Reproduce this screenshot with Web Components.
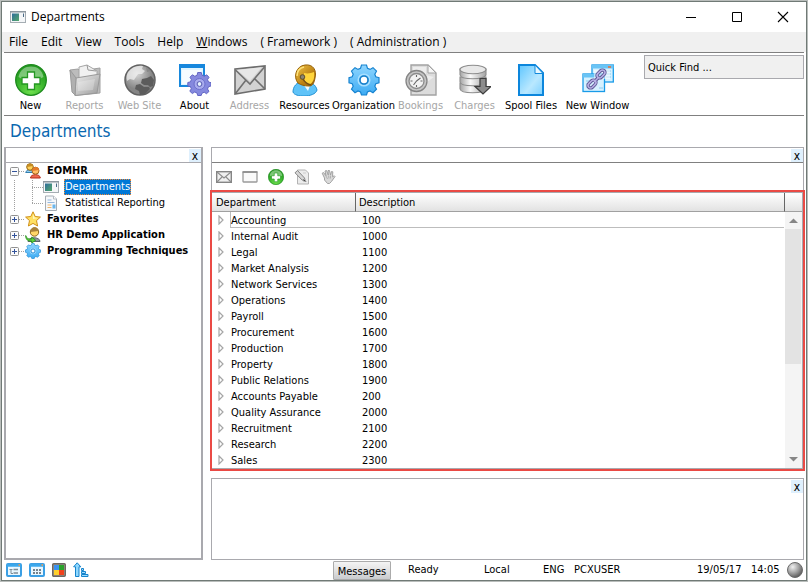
<!DOCTYPE html>
<html lang="en">
<head>
<meta charset="utf-8">
<title>Departments</title>
<style>
  html, body { margin: 0; height: 100%; }
  body {
    --ui: "DejaVu Sans Condensed", "DejaVu Sans", Tahoma, sans-serif;
    --menu: "Open Sans", "Noto Sans", sans-serif;
    --line: #a9a9ae;
    font: 11px/16px var(--ui);
    color: #000;
    background: #fff;
  }
</style>
</head>
<body>
<app-window></app-window>

<script>
const ICONS = {
  app: [16, 12, `<rect x=".5" y=".5" width="15" height="11" fill="#f4f6f8" stroke="#a5adb3"/><path d="M0 0h16v1.500H0z" fill="#8d979f"/><defs><linearGradient id="g" x2="1" y2="1"><stop stop-color="#2f6d9c"/><stop offset="1" stop-color="#55a86a"/></linearGradient></defs><rect x="2" y="2.500" width="7" height="7.500" fill="url(#g)"/><rect x="13" y="2.500" width="1" height="3.500" fill="#4a6a86"/>`],
  plus: [32, 32, `<defs><radialGradient id="g" cx=".5" cy=".85" r=".9"><stop offset="0" stop-color="#6fe04e"/><stop offset=".55" stop-color="#35b02a"/><stop offset="1" stop-color="#1d8f1c"/></radialGradient></defs><circle cx="16" cy="16" r="15.300" fill="url(#g)" stroke="#1c8a1c" stroke-width="1.300"/><path d="M3.500 13C5 5.500 10 2.500 16 2.500S27 5.500 28.500 13c-7 4-18 5-25 0z" fill="#fff" opacity=".38"/><path d="M12.500 8h7v5.500H25v6.500h-5.500v5.500h-7V20H7v-6.500h5.500z" fill="#fff" stroke="#249722" stroke-width="1.300"/>`],
  reports: [32, 32, `<defs><linearGradient id="g" x2="1" y2="1"><stop stop-color="#eee"/><stop offset="1" stop-color="#9a9a9a"/></linearGradient></defs><path d="M1 6l8-1 2 2 20-3v25l-25 2.500z" fill="#bcbcbc" stroke="#a0a0a0"/><path d="M10 3l8-2 5 3 5 3v16l-18 2z" fill="#f1f1f1" stroke="#a5a5a5"/><path d="M18 1l1 5 8 1" fill="none" stroke="#999"/><path d="M7 14l24-4-3 19-22 2.500z" fill="url(#g)" stroke="#999"/><path d="M1 6l6 8-1 17-3-3z" fill="#b0b0b0" stroke="#9a9a9a"/><path d="M9 18l17-3-2 11-15 1z" fill="#fff" opacity=".25"/>`],
  globe: [32, 32, `<defs><radialGradient id="g" cx=".4" cy=".3"><stop stop-color="#d5d5d5"/><stop offset="1" stop-color="#858585"/></radialGradient></defs><circle cx="16" cy="16" r="15" fill="url(#g)" stroke="#616161" stroke-width="1.500"/><path d="M4 8c4-5 10-7 15-6l-1 3 3 2-3 3-4 0-2 3-2 3-4-1-3 2c-1-4 0-7 1-9z" fill="#f3f3f3" opacity=".7"/><path d="M18 15l5-1 4-2 3 4-1 6-3 1-2-2-4 0-3-2zM12 21l4-1 4 3 5 0 1 2-5 5-5 1-1-4-4-2z" fill="#5c5c5c"/><path d="M22 3l5 4 -4 1z" fill="#888"/>`],
  about: [32, 32, `<rect x="1" y="2" width="24" height="20" fill="#dff4ff" stroke="#1888dc" stroke-width="2"/><rect x="0" y="0" width="26" height="4" fill="#1687dd"/><path d="M3 6h20l-12 14H3z" fill="#fff" opacity=".7"/><defs><path id="t" d="M-1.800-11h3.600l.7 2.700 2.400 1L7.200-8.700 9.500-6.200 8-3.800l1 2.300 2.600.7v3.200L9 3.200 8 5.500l1.500 2.400L7 10.200 4.700 8.700 2.400 9.800 1.700 12h-3.500l-.7-2.500-2.300-1L-7.200 10l-2.500-2.300L-8.200 5.300-9 3.200l-2.700-.7V-1l2.600-.6 1-2.300-1.400-2.400 2.400-2.400 2.400 1.500 2.300-1z"/></defs><g transform="translate(20.500 19.500)"><use href="#t" fill="#8589de" stroke="#6265c4"/></g><circle cx="20.500" cy="20" r="5.500" fill="#a9acee" stroke="#6c70cc"/><circle cx="20.500" cy="20" r="2.400" fill="#e6f3fd" stroke="#5256ae"/>`],
  address: [32, 32, `<path d="M1 5l30-3v23L1 30z" fill="#d2d2d2" stroke="#6d6d6d" stroke-width="1.600"/><path d="M1.500 29.500L12 16M31 25L20 14M1.500 6L16 20 30.500 3" fill="none" stroke="#707070" stroke-width="1.600"/><path d="M3 6l25-3-12 14z" fill="#efefef" opacity=".7"/>`],
  person: [32, 32, `<defs><linearGradient id="g" x2="1" y2="1"><stop stop-color="#f1c548"/><stop offset=".6" stop-color="#bd8214"/><stop offset="1" stop-color="#8d5d0b"/></linearGradient></defs><path d="M4 28c0-5 3-10 11-11 7 0 12 4 13 9-1 4-7 6-13 6-5 0-10-1-11-4z" fill="#5fc3f8" stroke="#2391d3"/><path d="M14 20l8-1-3 8z" fill="#f4fbff"/><path d="M9 19C4 13 7 2 16 1c8-1 12 5 10 13-1 6-3 8-6 8-5 0-8-1-11-3z" fill="url(#g)" stroke="#966006"/><path d="M15 9c4 1 7 0 10-1 1 6-1 11-4 12-4 0-7-4-6-11z" fill="#ffd53c"/><path d="M8 12c0-5 3-8 7-9" fill="none" stroke="#ffe27a" stroke-width="1.500"/><circle cx="13.500" cy="13" r="2.300" fill="#8a8474" stroke="#5f4f2c"/><path d="M14 15c2 4 4 5 8 6" fill="none" stroke="#725019" stroke-width="1.500"/>`],
  gear: [32, 32, `<defs><linearGradient id="g" x2="0" y2="1"><stop stop-color="#8fd6ff"/><stop offset="1" stop-color="#3dabf3"/></linearGradient></defs><path d="M13.500 1h5l1 3.400 2.500 1 3-1.700 3.500 3.500-1.700 3 1 2.600 3.200.9v5l-3.200 1-1 2.500 1.700 3-3.500 3.500-3-1.700-2.600 1-.9 3h-5l-1-3-2.500-1-3 1.700-3.500-3.500 1.700-3-1-2.500-3.200-1v-5l3.200-1 1-2.500-1.700-3L7 3.700l3 1.700 2.500-1z" fill="url(#g)" stroke="#1683d0" stroke-width="1.200"/><circle cx="16" cy="16" r="5.800" fill="none" stroke="#a9e0ff" stroke-width="1.500"/><circle cx="16" cy="16" r="4" fill="#fff" stroke="#167fca" stroke-width="1.600"/>`],
  bookings: [32, 32, `<path d="M6 1h17l8 8v22H6z" fill="#dcdcdc" stroke="#a2a2a2" stroke-width="1.400"/><path d="M23 1v8h8z" fill="#f6f6f6" stroke="#a2a2a2"/><path d="M8 3h13v8l8 2-21 15z" fill="#f3f3f3" opacity=".7"/><circle cx="11.500" cy="17" r="10.500" fill="#c6c6c6" stroke="#858585" stroke-width="1.300"/><circle cx="11.500" cy="17" r="7.500" fill="#f2f2f2" stroke="#8c8c8c" stroke-width="1.300"/><path d="M11.500 17l4-3M11.500 17l-3 4M11.500 11v2M11.500 21v2M5.500 17h2M15.500 17h2" stroke="#666" stroke-width="1.100"/>`],
  charges: [32, 32, `<defs><linearGradient id="g"><stop stop-color="#a4a4a4"/><stop offset=".4" stop-color="#fafafa"/><stop offset="1" stop-color="#a4a4a4"/></linearGradient></defs><g fill="url(#g)" stroke="#8c8c8c" stroke-width="1.100"><path d="M1 19v6c1 5 24 5 26 0v-6z"/><path d="M1 13v5c1 5 24 5 26 0v-5z"/><path d="M1 5v6c1 5 24 5 26 0V5z"/><ellipse cx="14" cy="5.500" rx="13" ry="4.300" fill="#e8e8e8"/></g><path d="M21 14.500h6v8h5L24 30l-8-7.500h5z" fill="#8c8c8c" stroke="#3d3d3d" stroke-width="1.200"/>`],
  file: [26, 32, `<defs><linearGradient id="g" x2="1" y2="1"><stop stop-color="#5fc6ff"/><stop offset=".6" stop-color="#b9e8ff"/><stop offset="1" stop-color="#7dd0ff"/></linearGradient></defs><path d="M1 1h16l8 8v22H1z" fill="url(#g)" stroke="#0c86dc" stroke-width="2"/><path d="M17 1v8.500h8z" fill="#e8f8ff" stroke="#1189dc"/>`],
  newwin: [32, 32, `<g fill="#d6f1ff" stroke="#199be8" stroke-width="1.300"><rect x="10" y="1" width="21.300" height="17"/><rect x="1" y="10" width="21.500" height="17.500"/></g><path d="M10 1h21.500v3.500H10zM1 10h21.500v3.500H1z" fill="#69c4f5"/><path d="M24 7h5M24 10h5M24 13h5M4 17h4M4 20h3M4 23h3M17 24h4" stroke="#8ccbee"/><path d="M12 6h16v9H12z" fill="#fff" opacity=".5"/><path d="M26 3h3" stroke="#f36e32" stroke-width="1.500"/><g fill="none" stroke="#5e5796" stroke-width="3.400"><rect x="-4.500" y="-2.500" width="9" height="5" rx="2.500" transform="translate(19 10) rotate(-45)"/><rect x="-4.500" y="-2.500" width="9" height="5" rx="2.500" transform="translate(10 20) rotate(-45)"/><path d="M12 18l5-5"/></g><g fill="none" stroke="#b8b1e4" stroke-width="1.500"><rect x="-4.500" y="-2.500" width="9" height="5" rx="2.500" transform="translate(19 10) rotate(-45)"/><rect x="-4.500" y="-2.500" width="9" height="5" rx="2.500" transform="translate(10 20) rotate(-45)"/><path d="M12 18l5-5"/></g>`],
  mail: [16, 12, `<rect x=".7" y=".7" width="14.600" height="10.600" fill="#f0f0f0" stroke="#858585" stroke-width="1.400"/><path d="M1 1l7 6 7-6M1 11l5-5M15 11l-5-5" fill="none" stroke="#8d8d8d" stroke-width="1.100"/>`],
  frame: [16, 12, `<rect x="1" y="1" width="14" height="10" rx=".5" fill="#fafafa" stroke="#9b9b9b" stroke-width="1.300"/><path d="M.5 1h15" stroke="#8a8a8a" stroke-width="1.500"/>`],
  edit: [16, 16, `<path d="M3.500 1h8l3 3v11h-11z" fill="#ececec" stroke="#b3b3b3"/><path d="M9 12.500h4M9 4h3" stroke="#ccc"/><path d="M1 3.800L3.500 1.500l7 7.500.8 3.200-3.200-1.200z" fill="#d6d6d6" stroke="#868686"/><path d="M9.500 10.500l1.800 1.800" stroke="#444"/>`],
  hand: [16, 16, `<path d="M4.500 9L2.200 4.200l1.300-.7L6 6.800 5 2l1.500-.5L8.300 6 8 1.500h1.500L10.500 6l1-3.500 1.300.3-.3 5 1.800-1 .7.700-3.500 5-2 2H7.500L4.500 11z" fill="#d9d9d9" stroke="#a2a2a2"/><path d="M6 7l1.500 3M8.500 6.500l.5 3M10.500 6.500v3" stroke="#a8a8a8" stroke-width=".8"/>`],
  people: [16, 16, `<path d="M.7 9.500C1 6 9 6 9 9.500z" fill="#8fccf2" stroke="#347fb0"/><circle cx="5" cy="4" r="3.300" fill="#ffd15a" stroke="#93630c"/><path d="M2 4c0-4 6-4 6-1z" fill="#c78d22"/><path d="M5.500 15c0-4.500 9.800-4.500 9.800 0z" fill="#f0694f" stroke="#b32c1b"/><circle cx="10.500" cy="7.700" r="3.500" fill="#ffbe66" stroke="#a2641d"/><path d="M7 8c0-5 7-5 7-1z" fill="#e57b2a"/>`],
  doc: [16, 16, `<path d="M2.500 1h8l3 3v11.500h-11z" fill="#f6f8fb" stroke="#a5adb5"/><path d="M10.500 1v3h3" fill="#fff" stroke="#b5bbc2"/><path d="M4.500 5h4M4.500 7.500h7" stroke="#94b7dc"/><path d="M4.500 10h4M4.500 12.500h4" stroke="#f0b76c"/><path d="M9.500 9.500h3v4h-3z" fill="#6bb6ec"/>`],
  star: [16, 16, `<path d="M8 .8l2.200 4.700 5.200.6-3.900 3.500 1.100 5.400L8 12.400 3.400 15l1.100-5.400L.6 6.100l5.200-.6z" fill="#ffe063" stroke="#d08f17" stroke-linejoin="round"/><path d="M8 3l1.500 3.500 3.500.5-5 1z" fill="#fff7bf"/>`],
  user: [16, 16, `<path d="M3 14.500c0-5 12-5 12 0z" fill="#8f989e" stroke="#5d666c"/><circle cx="9.500" cy="5" r="4.200" fill="#ffd667" stroke="#8e681c"/><path d="M5.500 5c0-6 8-6 8-1z" fill="#a9813a"/><path d="M.7 8.500c1 3 3 4 6 3.500V10l4 3.300-4 2.700v-2C3 14.500.5 12.500.7 8.500z" fill="#5fd23e" stroke="#248f1b" stroke-width=".8"/>`],
  wintree: [16, 14, `<rect x="1" y="1" width="14" height="12" rx="1" fill="#e9f7ff" stroke="#3b9fe4" stroke-width="2"/><path d="M1 2.500h14" stroke="#3ba8ec" stroke-width="2.500"/><path d="M12.500 2h1.500" stroke="#ff9d42" stroke-width="1.500"/><path d="M3.500 6.500h3M5 7v3.500h2" stroke="#7d8c96" fill="none"/><path d="M7.500 6.500h4.500M7.500 10h4.500" stroke="#7d8c96" stroke-width="1.600"/>`],
  wingrid: [16, 14, `<rect x="1" y="1" width="14" height="12" rx="1" fill="#e9f7ff" stroke="#3b9fe4" stroke-width="2"/><path d="M1 2.500h14" stroke="#3ba8ec" stroke-width="2.500"/><path d="M12.500 2h1.500" stroke="#ff9d42" stroke-width="1.500"/><path d="M4 7h8M4 10h8" stroke="#75828c" stroke-width="1.800" stroke-dasharray="2 1"/>`],
  colors: [14, 14, `<rect x=".7" y=".7" width="12.600" height="12.600" rx="1" fill="#a39a91" stroke="#6c6761" stroke-width="1.400"/><path d="M2 2h5v5H2z" fill="#3a92f2"/><path d="M7 2h5v5H7z" fill="#2ba32b"/><path d="M2 7h5v5H2z" fill="#ffd02c"/><path d="M7 7h5v5H7z" fill="#f0411c"/>`],
  sort: [16, 16, `<path d="M4.200.8l3.600 4H6V14.500H2.500V4.800H.6z" fill="#8fd8ff" stroke="#1583cb"/><path d="M8.500 6.500h2v2h-2zM8.500 9.500h4v2h-4zM8.500 12.500h6.500v2H8.500z" fill="#9fdcff" stroke="#1583cb"/>`],
  ball: [16, 16, `<defs><radialGradient id="g" cx=".35" cy=".3" r=".75"><stop stop-color="#f0f0f0"/><stop offset=".5" stop-color="#a6a6a6"/><stop offset="1" stop-color="#555"/></radialGradient></defs><circle cx="8" cy="8" r="7.500" fill="url(#g)" stroke="#6b6b6b"/>`],
  min: [12, 12, `<path d="M1 6.500h10" stroke="#000"/>`],
  max: [12, 12, `<path d="M1.500 1.500h9v9h-9z" fill="none" stroke="#000"/>`],
  close: [12, 12, `<path d="M1 1l10 10M11 1L1 11" stroke="#000" stroke-width="1.100"/>`],
  right: [6, 10, `<path d="M1 1l4 4-4 4z" fill="#fff" stroke="#a6a6a6" stroke-width="1.200"/>`],
  up: [9, 5, `<path d="M0 5l4.500-4.500L9 5z" fill="#868686"/>`],
  down: [9, 5, `<path d="M0 0l4.500 4.500L9 0z" fill="#868686"/>`],
  open: [9, 9, `<rect x=".5" y=".5" width="8" height="8" rx="1" fill="#fbfbfb" stroke="#919191"/><path d="M2 4.500h5" stroke="#33539b"/>`],
  shut: [9, 9, `<rect x=".5" y=".5" width="8" height="8" rx="1" fill="#fbfbfb" stroke="#919191"/><path d="M2 4.500h5M4.500 2v5" stroke="#33539b"/>`]
};

class Base extends HTMLElement {
  connectedCallback() {
    if (this.shadowRoot) return;
    const t = document.createElement('template');
    t.innerHTML = `<style>*,:host{box-sizing:border-box}button{font:inherit;color:inherit;border:0;background:none;padding:0;margin:0}</style>` + this.view();
    this.attachShadow({ mode: 'open' }).append(t.content.cloneNode(true));
  }
}
const define = (name, view) => customElements.define(name, class extends Base { view() { return view(this); } });

define('ui-icon', el => {
  const [w, h, body] = ICONS[el.getAttribute('name')];
  const size = el.getAttribute('size');
  return `<style>:host{display:inline-block;flex:none;line-height:0}svg{display:block}</style>
  <svg width="${size || w}" height="${size || h}" viewBox="0 0 ${w} ${h}" aria-hidden="true">${body}</svg>`;
});

define('title-bar', () => `<style>
  :host{display:flex;align-items:center;height:30px;flex:none;padding:0 0 0 8px;gap:5px;font:12px/16px var(--menu)}
  span{flex:1}
  button{width:46px;height:28px;display:grid;place-items:center}
  div{display:flex}
</style>
<ui-icon name="app"></ui-icon><span><slot></slot></span>
<div><button aria-label="Minimize"><ui-icon name="min"></ui-icon></button><button aria-label="Maximize"><ui-icon name="max"></ui-icon></button><button aria-label="Close"><ui-icon name="close"></ui-icon></button></div>`);

define('menu-bar', () => `<style>
  :host{display:flex;align-items:center;gap:13px;height:20px;flex:none;padding:0 7px;background:#f0f0f0;font:12px/18px var(--menu)}
</style>
<button>File</button><button>Edit</button><button>View</button><button>Tools</button><button>Help</button><button><u>W</u>indows</button><button>( Framework )</button><button>( Administration )</button>`);

define('tool-button', el => `<style>
  :host{display:block}
  button{width:100%;display:flex;flex-direction:column;align-items:center;gap:2px;line-height:14px;white-space:nowrap}
  span{padding-top:1px}
  button:disabled{color:#a6a6a6}
</style>
<button ${el.hasAttribute('disabled') ? 'disabled' : ''}><ui-icon name="${el.getAttribute('icon')}"></ui-icon><span><slot></slot></span></button>`);

define('tool-bar', () => `<style>
  :host{display:flex;justify-content:space-between;align-items:flex-start;height:64px;flex:none;margin:0 2px;border:solid #808080;border-width:1px 0}
  .tools{display:grid;grid-template-columns:53px repeat(5,55px) 63px 51px 57px 56px 77px;padding-top:11px}
  input{width:160px;height:24px;margin-top:2px;padding:0 3px;border:1px solid var(--line);border-radius:0;background:#f0f0f0;font:inherit;color:inherit;outline:0}
  input::placeholder{color:#000;opacity:1}
</style>
<div class="tools">
<tool-button icon="plus">New</tool-button><tool-button icon="reports" disabled>Reports</tool-button><tool-button icon="globe" disabled>Web Site</tool-button><tool-button icon="about">About</tool-button><tool-button icon="address" disabled>Address</tool-button><tool-button icon="person">Resources</tool-button><tool-button icon="gear">Organization</tool-button><tool-button icon="bookings" disabled>Bookings</tool-button><tool-button icon="charges" disabled>Charges</tool-button><tool-button icon="file">Spool Files</tool-button><tool-button icon="newwin">New Window</tool-button>
</div>
<input type="text" aria-label="Quick Find" placeholder="Quick Find ...">`);

define('ui-panel', () => `<style>
  :host{display:flex;flex-direction:column;min-width:0;min-height:0;border:1px solid var(--line)}
  header{display:flex;justify-content:flex-end;height:15px;flex:none;border-bottom:1px solid var(--rule,#808080)}
  button{width:12px;height:13px;margin-top:1px;background:#dff0fd;font-size:12px;line-height:14px}
</style>
<header><button aria-label="Close panel">x</button></header><slot></slot>`);

define('tree-item', el => {
  const kids = el.querySelector('tree-item');
  return `<style>
  :host{display:block}
  .row{display:flex;align-items:center;height:16px}
  .toggle{width:9px;height:9px;display:grid}
  .dots{height:1px;background:repeating-linear-gradient(90deg,#a0a0a0 0 1px,transparent 1px 2px)}
  .a{width:6px}
  .b{width:11px;margin-left:18px}
  .label{margin-left:5px;padding:0 1px;font-weight:bold;line-height:16px;white-space:nowrap}
  .leaf{font-weight:normal}
  .on{background:#0078d7;color:#fff;outline:1px dotted #f08a38;outline-offset:-1px}
  .kids{margin-left:4px;background:repeating-linear-gradient(0deg,#a0a0a0 0 1px,transparent 1px 2px) 0 0/1px 100% no-repeat,
    repeating-linear-gradient(0deg,#a0a0a0 0 1px,transparent 1px 2px) 18px 0/1px calc(100% - 8px) no-repeat}
</style>
<div class="row">${el.hasAttribute('leaf')
    ? '<span class="dots b"></span>'
    : `<button class="toggle" aria-label="Toggle"><ui-icon name="${kids ? 'open' : 'shut'}"></ui-icon></button><span class="dots a"></span>`}
<ui-icon name="${el.getAttribute('icon')}" ${el.getAttribute('icon') === 'gear' ? 'size="16"' : ''}></ui-icon>
<span class="label ${el.hasAttribute('leaf') ? 'leaf' : ''} ${el.hasAttribute('selected') ? 'on' : ''}">${el.getAttribute('label')}</span></div>
${kids ? '<div class="kids"><slot></slot></div>' : ''}`;
});

define('nav-tree', () => `<style>
  :host{display:block;padding:0 4px}
</style>
<tree-item label="EOMHR" icon="people"><tree-item leaf selected label="Departments" icon="app"></tree-item><tree-item leaf label="Statistical Reporting" icon="doc"></tree-item></tree-item>
<tree-item label="Favorites" icon="star"></tree-item>
<tree-item label="HR Demo Application" icon="user"></tree-item>
<tree-item label="Programming Techniques" icon="gear"></tree-item>`);

define('list-tools', () => `<style>
  :host{display:flex;align-items:center;gap:10px;height:27px;padding:0 4px;flex:none}
  button{display:grid;place-items:center;width:16px;height:16px}
</style>
<button aria-label="Mail"><ui-icon name="mail"></ui-icon></button><button aria-label="Window"><ui-icon name="frame"></ui-icon></button><button aria-label="Add"><ui-icon name="plus" size="16"></ui-icon></button><button aria-label="Edit"><ui-icon name="edit"></ui-icon></button><button aria-label="Hold"><ui-icon name="hand"></ui-icon></button>`);

define('scroll-bar', () => `<style>
  :host{display:flex;flex-direction:column;width:18px;flex:none}
  .cap{height:19px;border-left:1px solid #666;border-bottom:1px solid #a0a0a0;background:linear-gradient(#fff,#e2e2e2)}
  .track{flex:1;display:flex;flex-direction:column;background:#f4f4f4;padding-right:1px;margin-left:1px}
  button{height:17px;display:grid;place-items:center;flex:none}
  .rail{flex:1}
  .thumb{height:61%;background:#e3e3e3}
</style>
<div class="cap"></div><div class="track"><button aria-label="Scroll up"><ui-icon name="up"></ui-icon></button><div class="rail"><div class="thumb"></div></div><button aria-label="Scroll down"><ui-icon name="down"></ui-icon></button></div>`);

const DEPARTMENTS = [['Accounting', 100], ['Internal Audit', 1000], ['Legal', 1100], ['Market Analysis', 1200], ['Network Services', 1300], ['Operations', 1400], ['Payroll', 1500], ['Procurement', 1600], ['Production', 1700], ['Property', 1800], ['Public Relations', 1900], ['Accounts Payable', 200], ['Quality Assurance', 2000], ['Recruitment', 2100], ['Research', 2200], ['Sales', 2300]];

define('department-list', () => `<style>
  :host{display:flex;flex:1;min-height:0;margin:0 -2px;border:2px solid #ea4a45;background:#fff}
  .frame{flex:1;display:flex;min-width:0;border:1px solid var(--line);border-left:0}
  .view{flex:1;min-width:0;overflow:hidden}
  table{width:100%;border-collapse:separate;border-spacing:0;table-layout:fixed}
  col:first-child{width:144px}
  th{height:19px;padding:1px 3px 0;text-align:left;font-weight:normal;background:linear-gradient(#fff,#e2e2e2);border-bottom:1px solid #a0a0a0}
  th:first-child{padding-left:4px;border-right:1px solid #666}
  td{height:16px;padding:0 0 0 6px;line-height:16px}
  td:first-child{padding:0}
  td > div{display:flex;align-items:center;height:16px}
  td button{width:18px;height:16px;padding-left:6px;display:flex;align-items:center}
  .name,.code{display:block;flex:1;height:16px;line-height:17px}
  .name{border-left:1px solid transparent}
  tbody tr:first-child .name{border-left-color:#bdbdbd}
  tbody tr:first-child .name,tbody tr:first-child td + td{box-shadow:inset 0 -1px #bdbdbd}
</style>
<div class="frame"><div class="view"><table><colgroup><col><col></colgroup>
<thead><tr><th scope="col">Department</th><th scope="col">Description</th></tr></thead>
<tbody>${DEPARTMENTS.map(([n, c]) => `<tr><td><div><button aria-label="Expand ${n}"><ui-icon name="right"></ui-icon></button><span class="name">${n}</span></div></td><td><span class="code">${c}</span></td></tr>`).join('')}</tbody></table></div><scroll-bar></scroll-bar></div>`);

define('status-bar', () => `<style>
  :host{display:grid;grid-template-columns:327px 75px 76px 59px 31px 1fr 54px 36px 17px;align-items:center;height:20px;flex:none;padding:0 2px 0 4px}
  .icons{display:flex;align-items:center;gap:7px}
  .icons button{display:grid}
  .msg{width:58px;height:19px;border:1px solid #ababab;border-radius:1px;background:linear-gradient(#f4f4f4,#e2e2e2 50%,#c9cbce);line-height:20px;overflow:hidden}
</style>
<div class="icons"><button aria-label="Tree view"><ui-icon name="wintree"></ui-icon></button><button aria-label="Grid view"><ui-icon name="wingrid"></ui-icon></button><button aria-label="Colors"><ui-icon name="colors"></ui-icon></button><button aria-label="Sort"><ui-icon name="sort"></ui-icon></button></div>
<button class="msg">Messages</button><span>Ready</span><span>Local</span><span>ENG</span><span>PCXUSER</span><span>19/05/17</span><span>14:05</span><ui-icon name="ball"></ui-icon>`);

define('app-window', () => `<style>
  :host{display:flex;flex-direction:column;height:100vh;border:1px solid #b9bdbb}
  .win{flex:1;display:flex;flex-direction:column;min-height:0;border:1px solid #707a76}
  h1{margin:0;padding:0 8px;height:31px;flex:none;font-weight:normal;font-size:17px;line-height:31px;color:#0a68b0}
  main{flex:1;min-height:0;display:grid;grid-template-columns:199px 1fr;gap:8px;padding:0 2px}
  .left{border-width:1px 2px 2px 2px;--rule:var(--line)}
  .right{display:grid;grid-template-rows:1fr 82px;gap:7px;min-height:0;min-width:0}
  .list{border-bottom:0}
</style>
<div class="win">
<title-bar>Departments</title-bar><menu-bar></menu-bar><tool-bar></tool-bar>
<h1>Departments</h1>
<main><ui-panel class="left"><nav-tree></nav-tree></ui-panel>
<div class="right"><ui-panel class="list"><list-tools></list-tools><department-list></department-list></ui-panel><ui-panel style="--rule:transparent"></ui-panel></div></main>
<status-bar></status-bar></div>`);
</script>
</body>
</html>
